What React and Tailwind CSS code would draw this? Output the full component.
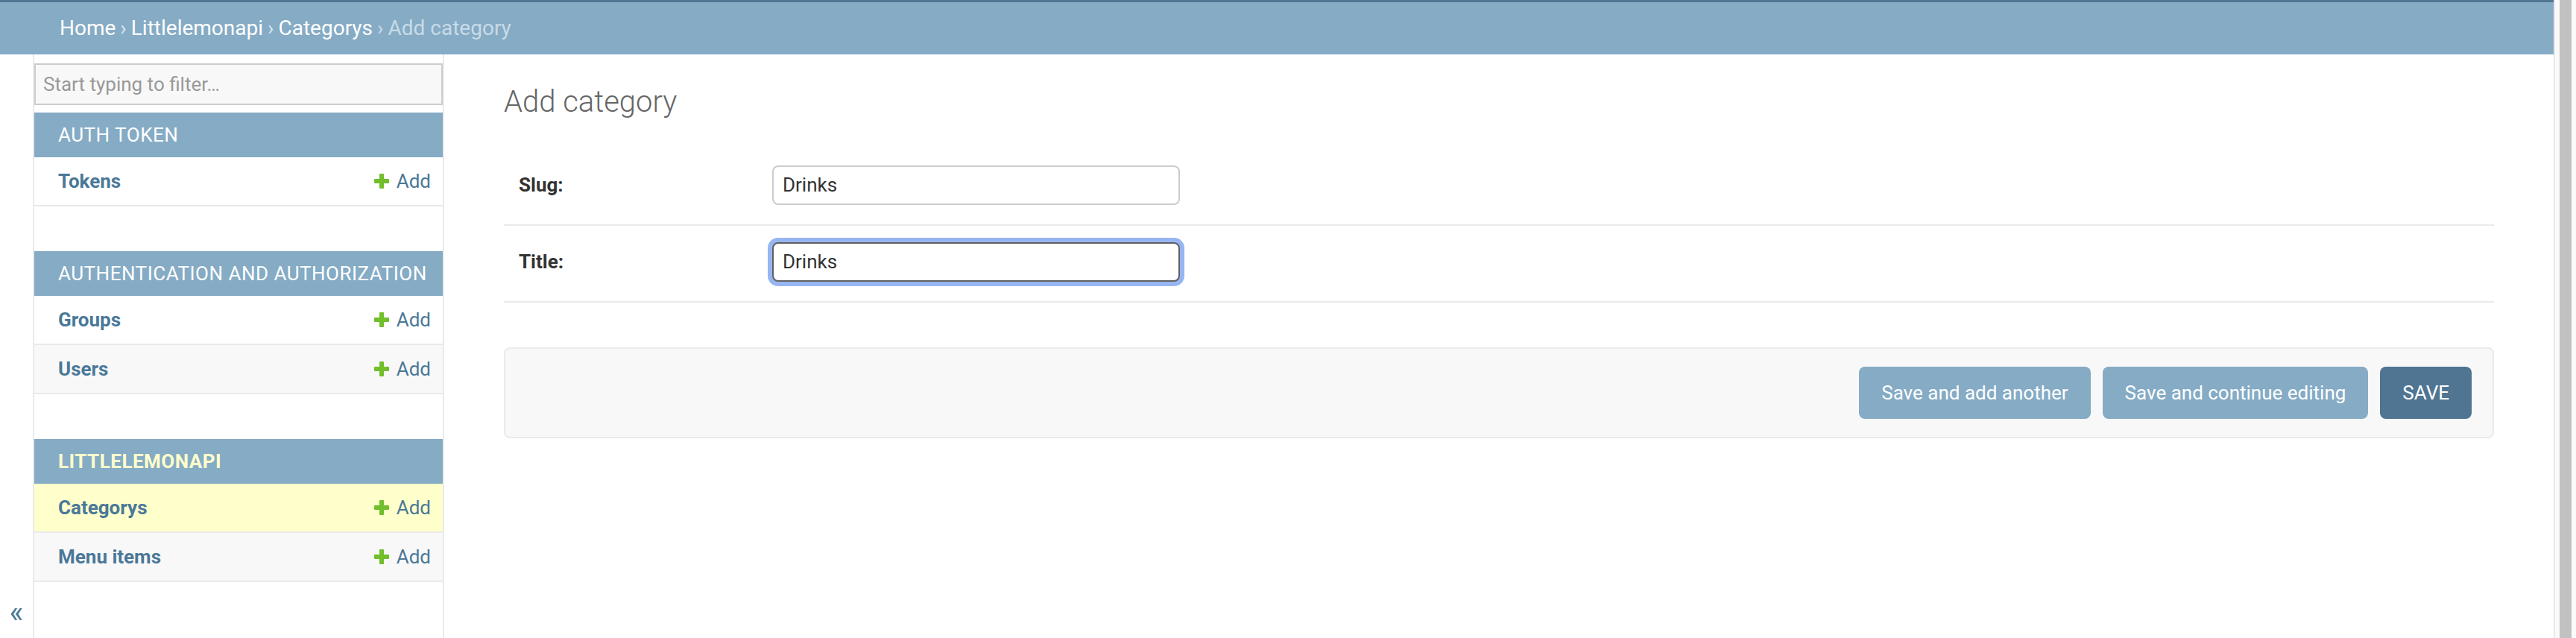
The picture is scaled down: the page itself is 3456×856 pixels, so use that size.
const font = { fontFamily: 'Roboto, "Liberation Sans", sans-serif' };

function PlusIcon() {
  return (
    <svg width="20" height="20" viewBox="0 0 20 20" className="shrink-0">
      <rect x="7" y="0" width="6" height="20" rx="1" fill="#70bf2b" />
      <rect x="0" y="7" width="20" height="6" rx="1" fill="#70bf2b" />
    </svg>
  );
}

function ModelRow({ name, bg }) {
  return (
    <div className={`flex items-center justify-between pl-[32px] pr-[16px] py-[16px] border-b-2 border-[#eaeaea] ${bg}`}>
      <span className="text-[26px] leading-[32px] font-bold text-[#4a7898]">{name}</span>
      <span className="flex items-center gap-[10px] text-[26px] leading-[32px] text-[#4a7898]">
        <PlusIcon />
        Add
      </span>
    </div>
  );
}

function AppModule({ title, current, children }) {
  return (
    <div className="mb-[60px]">
      <div className="h-[60px] flex items-center pl-[32px] bg-[#85abc5]">
        <span
          className={`text-[26px] uppercase tracking-[0.5px] ${current ? 'font-bold text-[#ffffcc]' : 'text-white'}`}
        >
          {title}
        </span>
      </div>
      {children}
    </div>
  );
}

function FormRow({ label, focused }) {
  return (
    <div className="flex items-center px-[20px] pt-[22px] pb-[26px] border-b-2 border-[#eaeaea]">
      <label className="w-[320px] mr-[20px] text-[26px] font-bold text-[#333]">{label}</label>
      <div
        className={`w-[547px] h-[53px] flex items-center px-[12px] rounded-[8px] bg-white text-[26px] text-[#333] border-2 ${
          focused ? 'border-[#5f5f5f] shadow-[0_0_0_6px_#97b5f1]' : 'border-[#cccccc]'
        }`}
      >
        Drinks
      </div>
    </div>
  );
}

export default function App() {
  return (
    <div className="flex w-full h-[856px] overflow-hidden bg-white" style={font}>
      <div className="flex-1 flex flex-col min-w-0">
        <div className="h-[3px] bg-[#4f7592]" />
        <div className="h-[70px] flex items-center px-[80px] bg-[#85abc5] text-[28px] text-white">
          <span>Home</span>
          <span className="mx-[6px] text-[#d6e6ef]">›</span>
          <span>Littlelemonapi</span>
          <span className="mx-[6px] text-[#d6e6ef]">›</span>
          <span>Categorys</span>
          <span className="mx-[6px] text-[#c8dbe7]">›</span>
          <span className="text-[#c8dbe7]">Add category</span>
        </div>

        <div className="flex flex-1 min-h-0">
          <div className="w-[46px] shrink-0 border-r-2 border-[#eaeaea] flex flex-col justify-end items-center pb-[14px]">
            <span className="text-[40px] leading-[40px] text-[#4a7898]">«</span>
          </div>

          <div className="w-[550px] shrink-0 border-r-2 border-[#eaeaea] pt-[2px]">
            <div className="my-[10px] h-[56px] flex items-center px-[10px] border-2 border-[#cccccc] bg-[#f8f8f8] text-[26px] text-[#999]">
              Start typing to filter…
            </div>
            <AppModule title="Auth Token">
              <ModelRow name="Tokens" bg="bg-white" />
            </AppModule>
            <AppModule title="Authentication and Authorization">
              <ModelRow name="Groups" bg="bg-white" />
              <ModelRow name="Users" bg="bg-[#f8f8f8]" />
            </AppModule>
            <AppModule title="Littlelemonapi" current>
              <ModelRow name="Categorys" bg="bg-[#ffffcc]" />
              <ModelRow name="Menu items" bg="bg-[#f8f8f8]" />
            </AppModule>
          </div>

          <div className="flex-1 min-w-0 px-[80px] pt-[40px]">
            <h1 className="text-[40px] leading-[47px] font-light text-[#666] mb-[40px]">Add category</h1>
            <FormRow label="Slug:" />
            <FormRow label="Title:" focused />
            <div className="mt-[60px] flex justify-end gap-[16px] px-[28px] py-[24px] bg-[#f8f8f8] border-2 border-[#eaeaea] rounded-[8px]">
              <button className="h-[70px] px-[30px] rounded-[8px] bg-[#85abc5] text-[26px] text-white">
                Save and add another
              </button>
              <button className="h-[70px] px-[30px] rounded-[8px] bg-[#85abc5] text-[26px] text-white">
                Save and continue editing
              </button>
              <button className="h-[70px] px-[30px] rounded-[8px] bg-[#4f7592] text-[26px] text-white">
                SAVE
              </button>
            </div>
          </div>
        </div>
      </div>

      <div className="w-[30px] shrink-0 bg-[#fafafa] border-l-2 border-[#e8e8e8] flex pl-[6px]">
        <div className="w-[16px] h-full bg-[#c1c1c1]" />
      </div>
    </div>
  );
}
